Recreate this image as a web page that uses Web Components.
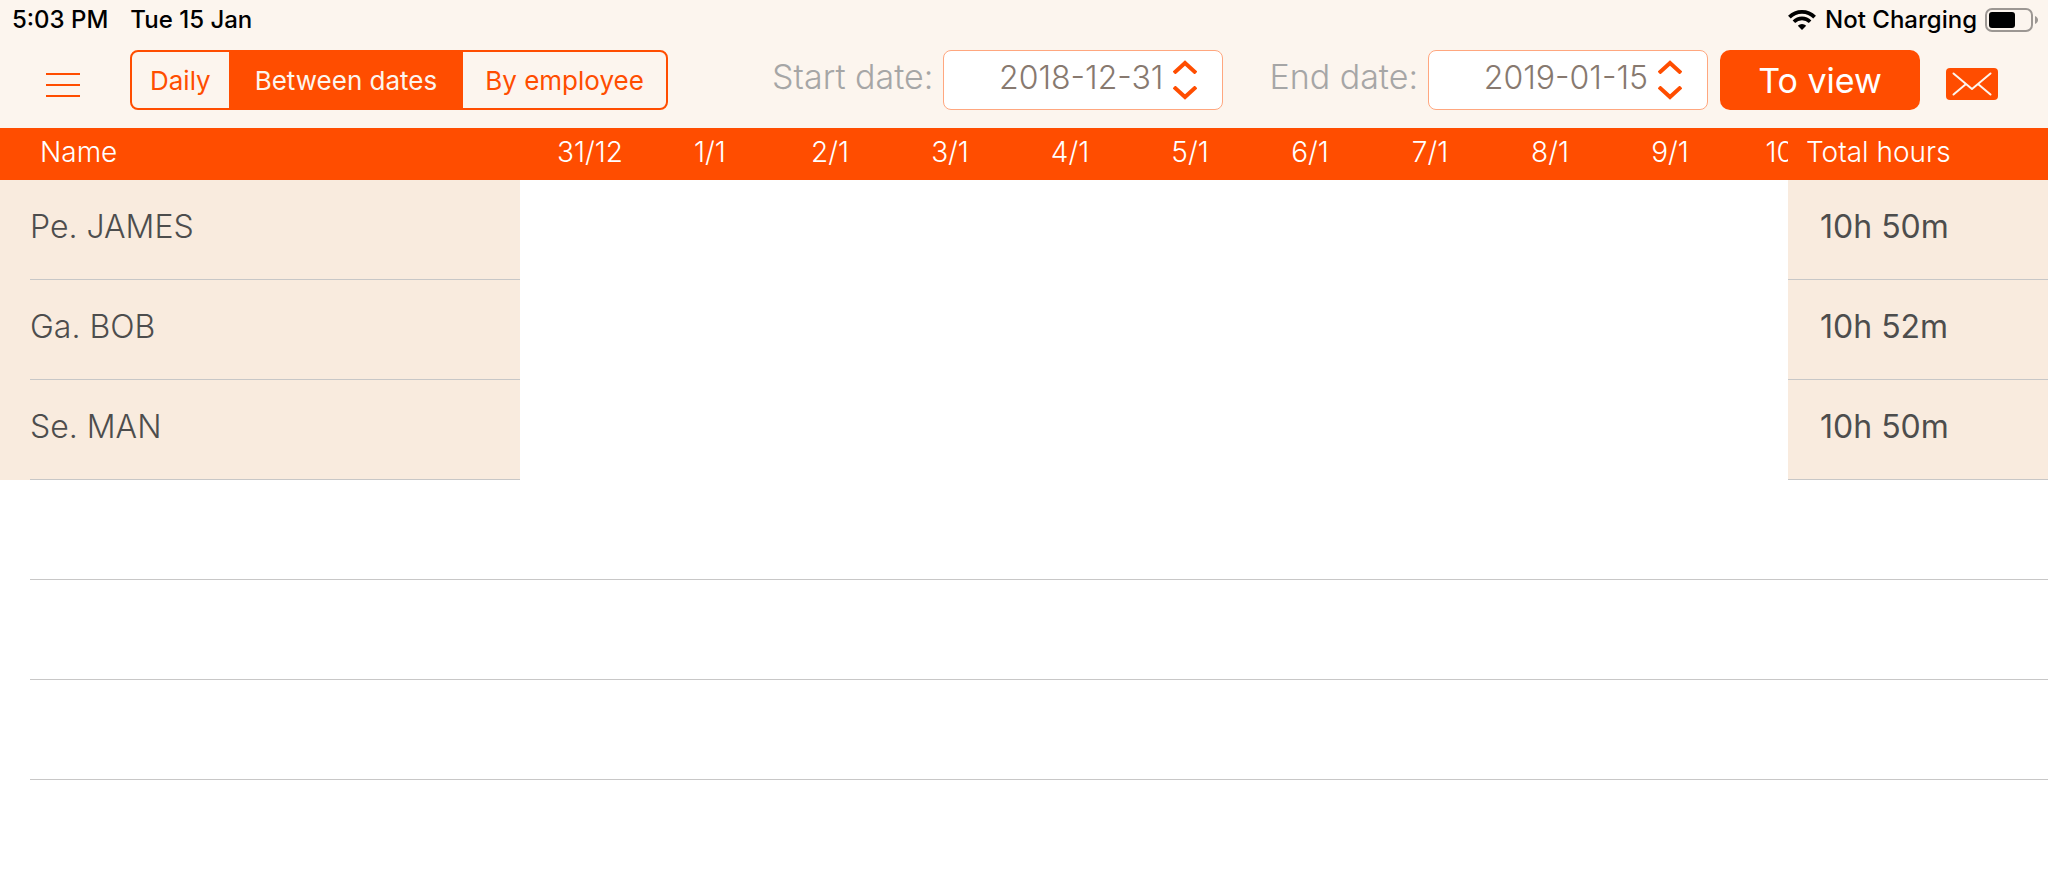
<!DOCTYPE html>
<html lang="en">
<head>
<meta charset="utf-8">
<meta name="viewport" content="width=device-width, initial-scale=1">
<title>Working hours</title>
<style>
    body
    {
        --accent: #ff4d00;
        --cream: #fcf5ee;
        --peach: #f9ebde;
        --line: #c8c7c7;
        --ink: #4d4d4d;
        margin: 0;
        background-color: #fff;
        font-family: Inter, Roboto, sans-serif;
    }
</style>
</head>
<body>
<hours-page></hours-page>

<script>
// Status bar: clock on the left, network and battery on the right
const statusTemplate = document.createElement("template");

statusTemplate.innerHTML =
    `
    <style>
        :host
        {
            display: flex;
            justify-content: space-between;
            align-items: center;
            height: 40px;
            padding: 0 10px 0 12px;
            font-size: 24px;
            font-weight: 500;
            line-height: 40px;
            color: #000;
        }

        div
        {
            display: flex;
            align-items: center;
        }

        .left
        {
            gap: 22px;
        }

        .right
        {
            gap: 8px;
        }

        svg
        {
            display: block;
        }
    </style>

    <div class="left">
        <slot name="time"></slot>
        <slot name="date"></slot>
    </div>
    <div class="right">
        <svg width="30" height="22" viewBox="0 0 30 22" aria-hidden="true">
            <path d="M2.4 8.1a17.8 17.8 0 0 1 25.2 0" fill="none" stroke="#000" stroke-width="3.8"/>
            <path d="M6.9 12.7a11.5 11.5 0 0 1 16.2 0" fill="none" stroke="#000" stroke-width="3.6"/>
            <path d="M15 21l-4.2-4.3a6 6 0 0 1 8.4 0z" fill="#000"/>
        </svg>
        <slot name="power"></slot>
        <svg width="53" height="24" viewBox="0 0 53 24" aria-hidden="true">
            <rect x="1" y="1" width="46" height="22" rx="6" fill="none" stroke="#9c9793" stroke-width="2"/>
            <rect x="4" y="4" width="26" height="16" rx="3" fill="#000"/>
            <path d="M50 8c4 1.4 4 6.6 0 8z" fill="#9c9793"/>
        </svg>
    </div>
`;

class StatusBar extends HTMLElement {
    constructor() {
        super();
        this.attachShadow({ mode: "open" }).appendChild(statusTemplate.content.cloneNode(true));
    }
}

customElements.define("status-bar", StatusBar);

// Segmented control, one button for each view
const viewTemplate = document.createElement("template");

viewTemplate.innerHTML =
    `
    <style>
        :host
        {
            display: block;
        }

        div
        {
            display: flex;
            box-sizing: border-box;
            height: 60px;
            border: 2px solid var(--accent);
            border-radius: 8px;
            overflow: hidden;
        }

        button
        {
            padding: 0 26px;
            border: 0;
            background: none;
            color: var(--accent);
            font: 400 26px Inter, Roboto, sans-serif;
            white-space: nowrap;
            cursor: pointer;
        }

        button:first-child
        {
            padding: 0 18px;
        }

        button:last-child
        {
            padding: 0 22px;
        }

        button[aria-pressed="true"]
        {
            background-color: var(--accent);
            color: var(--cream);
        }
    </style>

    <div role="group" aria-label="View">
        <button type="button" aria-pressed="false">Daily</button>
        <button type="button" aria-pressed="true">Between dates</button>
        <button type="button" aria-pressed="false">By employee</button>
    </div>
`;

class ViewSwitch extends HTMLElement {
    constructor() {
        super();
        const shadowRoot = this.attachShadow({ mode: "open" });
        shadowRoot.appendChild(viewTemplate.content.cloneNode(true));

        const buttons = shadowRoot.querySelectorAll("button");
        buttons.forEach((button) => {
            button.addEventListener("click", () => {
                buttons.forEach((b) => b.setAttribute("aria-pressed", String(b === button)));
            });
        });
    }
}

customElements.define("view-switch", ViewSwitch);

// Date box with its label and up / down arrows
const dateTemplate = document.createElement("template");

dateTemplate.innerHTML =
    `
    <style>
        :host
        {
            display: flex;
            gap: 10px;
            font-weight: 300;
        }

        label
        {
            font-size: 34px;
            line-height: 54px;
            color: #a6a6a6;
            white-space: nowrap;
        }

        .box
        {
            display: flex;
            align-items: center;
            gap: 10px;
            box-sizing: border-box;
            width: 280px;
            height: 60px;
            padding-right: 25px;
            border: 1px solid #ffa77f;
            border-radius: 8px;
            background-color: #fff;
        }

        input
        {
            flex: 1;
            min-width: 0;
            height: 58px;
            box-sizing: border-box;
            padding: 0 0 6px;
            border: 0;
            outline: none;
            background: none;
            color: #87796f;
            font: 300 32px Inter, Roboto, sans-serif;
            text-align: right;
        }

        .arrows
        {
            display: flex;
            flex-direction: column;
            gap: 12px;
        }

        button
        {
            display: block;
            padding: 0;
            border: 0;
            background: none;
            cursor: pointer;
        }

        svg
        {
            display: block;
        }

        path
        {
            fill: none;
            stroke: var(--accent);
            stroke-width: 4;
        }
    </style>

    <label for="date"><slot></slot></label>
    <div class="box">
        <input id="date" type="text" inputmode="numeric">
        <div class="arrows">
            <button type="button" aria-label="Next day" data-step="1">
                <svg width="24" height="14" viewBox="0 0 24 14"><path d="M1 13L12 3l11 10"/></svg>
            </button>
            <button type="button" aria-label="Previous day" data-step="-1">
                <svg width="24" height="14" viewBox="0 0 24 14"><path d="M1 1L12 11l11-10"/></svg>
            </button>
        </div>
    </div>
`;

class DateField extends HTMLElement {
    constructor() {
        super();
        this.attachShadow({ mode: "open" }).appendChild(dateTemplate.content.cloneNode(true));
    }

    connectedCallback() {
        const input = this.shadowRoot.querySelector("input");
        input.value = this.getAttribute("value");

        this.shadowRoot.querySelectorAll("button").forEach((button) => {
            button.onclick = () => {
                const day = new Date(input.value);
                if (isNaN(day)) return;
                day.setUTCDate(day.getUTCDate() + Number(button.dataset.step));
                input.value = day.toISOString().slice(0, 10);
            };
        });
    }
}

customElements.define("date-field", DateField);

// Toolbar
const toolbarTemplate = document.createElement("template");

toolbarTemplate.innerHTML =
    `
    <style>
        :host
        {
            display: flex;
            height: 60px;
            padding: 10px 50px 18px 46px;
        }

        button
        {
            padding: 0;
            border: 0;
            background: none;
            cursor: pointer;
        }

        svg
        {
            display: block;
        }

        .icon
        {
            padding-top: 8px;
        }

        view-switch
        {
            margin: 0 auto 0 50px;
        }

        date-field + date-field
        {
            margin-left: 46px;
        }

        .submit
        {
            width: 200px;
            margin: 0 26px 0 12px;
            border-radius: 10px;
            background-color: var(--accent);
            color: #fff;
            font: 400 34px Inter, Roboto, sans-serif;
        }
    </style>

    <button class="icon" type="button" aria-label="Menu">
        <svg width="34" height="26" viewBox="0 0 34 26"><path d="M0 3h34M0 14h34M0 25h34" stroke="var(--accent)" stroke-width="2"/></svg>
    </button>
    <view-switch></view-switch>
    <date-field value="2018-12-31">Start date:</date-field>
    <date-field value="2019-01-15">End date:</date-field>
    <button class="submit" type="button">To view</button>
    <button class="icon" type="button" aria-label="Send by mail">
        <svg width="52" height="32" viewBox="0 0 52 32">
            <rect width="52" height="32" rx="4" fill="var(--accent)"/>
            <path d="M7.5 5.5L26 21 44.5 5.5M7.5 26.5L20 16M32 16l12.5 10.5" fill="none" stroke="var(--cream)" stroke-width="2" stroke-linecap="round" stroke-linejoin="round"/>
        </svg>
    </button>
`;

class HoursToolbar extends HTMLElement {
    constructor() {
        super();
        this.attachShadow({ mode: "open" }).appendChild(toolbarTemplate.content.cloneNode(true));
    }
}

customElements.define("hours-toolbar", HoursToolbar);

// Hours table
const days = ["31/12", "1/1", "2/1", "3/1", "4/1", "5/1", "6/1", "7/1", "8/1", "9/1"];
const employees = [
    { name: "Pe. JAMES", total: "10h 50m" },
    { name: "Ga. BOB", total: "10h 52m" },
    { name: "Se. MAN", total: "10h 50m" },
];
const emptyRows = 3;

const tableStyle =
    `
    <style>
        :host
        {
            display: block;
        }

        table
        {
            width: 100%;
            table-layout: fixed;
            border-collapse: collapse;
            color: var(--ink);
        }

        th, td
        {
            padding: 0;
            text-align: left;
            white-space: nowrap;
        }

        thead
        {
            background-color: var(--accent);
        }

        thead th
        {
            height: 48px;
            padding-bottom: 4px;
            overflow: hidden;
            color: #fff;
            font-size: 28px;
            font-weight: 300;
        }

        thead .name
        {
            width: 480px;
            padding-left: 40px;
        }

        thead .day
        {
            width: 120px;
            text-align: center;
        }

        thead .name + .day
        {
            padding-left: 10px;
        }

        /* last day runs under the total column */
        thead .last span
        {
            display: block;
            width: 120px;
            text-align: center;
        }

        thead .total
        {
            width: 242px;
            padding-left: 18px;
        }

        tbody th, tbody .total
        {
            background-color: var(--peach);
            font-size: 32px;
            font-weight: 300;
        }

        tbody .total
        {
            font-weight: 400;
        }

        tbody th, .empty
        {
            padding-left: 30px;
        }

        /* the rule under a row starts at the text */
        .cell
        {
            box-sizing: border-box;
            height: 100px;
            border-bottom: 1px solid var(--line);
            line-height: 94px;
        }

        tbody .total .cell
        {
            padding-left: 32px;
        }
    </style>
`;

class HoursTable extends HTMLElement {
    constructor() {
        super();
        const columns = days.length + 3;
        this.attachShadow({ mode: "open" }).innerHTML =
            tableStyle +
            `
            <table>
                <thead>
                    <tr>
                        <th class="name" scope="col">Name</th>
                        ${days.map((day) => `<th class="day" scope="col">${day}</th>`).join("")}
                        <th class="last" scope="col"><span>10/1</span></th>
                        <th class="total" scope="col">Total hours</th>
                    </tr>
                </thead>
                <tbody>
                    ${employees.map((e) => `
                    <tr>
                        <th scope="row"><div class="cell">${e.name}</div></th>
                        <td colspan="${days.length + 1}"></td>
                        <td class="total"><div class="cell">${e.total}</div></td>
                    </tr>`).join("")}
                    ${`<tr><td class="empty" colspan="${columns}"><div class="cell"></div></td></tr>`.repeat(emptyRows)}
                </tbody>
            </table>
        `;
    }
}

customElements.define("hours-table", HoursTable);

// Whole page
const pageTemplate = document.createElement("template");

pageTemplate.innerHTML =
    `
    <style>
        :host
        {
            display: block;
        }

        header
        {
            background-color: var(--cream);
        }
    </style>

    <header>
        <status-bar>
            <span slot="time">5:03 PM</span>
            <span slot="date">Tue 15 Jan</span>
            <span slot="power">Not Charging</span>
        </status-bar>
        <hours-toolbar></hours-toolbar>
    </header>
    <main>
        <hours-table></hours-table>
    </main>
`;

class HoursPage extends HTMLElement {
    constructor() {
        super();
        this.attachShadow({ mode: "open" }).appendChild(pageTemplate.content.cloneNode(true));
    }
}

customElements.define("hours-page", HoursPage);
</script>
</body>
</html>
